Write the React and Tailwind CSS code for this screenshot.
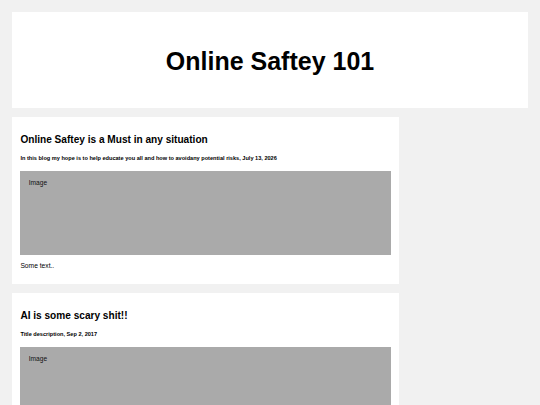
export default function App() {
  const Card = ({ title, sub, first }) => (
    <div className={`bg-white px-[8.4px] pt-[9.4px] pb-[8.4px] flow-root ${first ? "mt-[8.6px]" : "mt-[8.4px]"}`}>
      <h2 className="text-[10.1px] font-bold mt-[8.3px] mb-[8.6px]">{title}</h2>
      <h5 className="text-[5.6px] font-bold mt-[9.3px] mb-[10.3px]">{sub}</h5>
      <div className="bg-[#aaaaaa] h-[84.5px] p-[8.4px] text-[6.6px] text-[#111]">Image</div>
      <p className="text-[6.7px] my-[6.7px]">Some text..</p>
    </div>
  );
  return (
    <div
      className="bg-[#f1f1f1] p-[12px] leading-[normal] text-black overflow-hidden h-[405px]"
      style={{ fontFamily: '"Liberation Sans", Arial, sans-serif' }}
    >
      <div className="bg-white h-[96px] pt-[35px] text-center">
        <h1 className="text-[25px] font-bold leading-[normal]">Online Saftey 101</h1>
      </div>
      <div className="flex">
        <div className="w-3/4">
          <Card
            first
            title="Online Saftey is a Must in any situation"
            sub="In this blog my hope is to help educate you all and how to avoidany potential risks, July 13, 2026"
          />
          <Card title="AI is some scary shit!!" sub="Title description, Sep 2, 2017" />
        </div>
        <div className="w-1/4"></div>
      </div>
    </div>
  );
}
